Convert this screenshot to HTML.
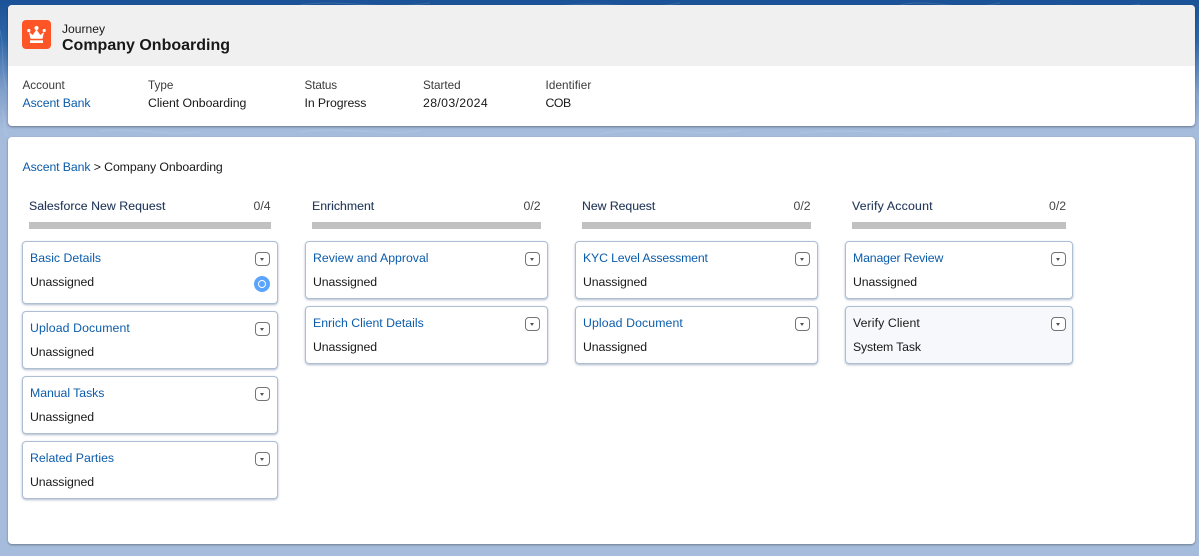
<!DOCTYPE html>
<html><head><meta charset="utf-8">
<style>
html,body{margin:0;padding:0}
body{width:1199px;height:556px;overflow:hidden;position:relative;font-family:"Liberation Sans",sans-serif;font-size:12.3px;color:#181818;background:linear-gradient(180deg,#1b5297 0,#2f66a8 40px,#7f9fcb 90px,#a6bcdc 130px,#a6bcdc 100%)}
.t{position:absolute;white-space:nowrap;line-height:16px}
.a{color:#0b5cab}
.p{position:absolute;background:#fff;box-shadow:0 1px 2px rgba(0,0,0,.35)}
.card{position:absolute;box-sizing:border-box;background:#fff;border:1px solid #aebfd4;border-radius:4px;box-shadow:0 1px 2px rgba(70,100,140,.45)}
.bar{position:absolute;height:7px;top:222px;background:#c1c1c1}
.dd{position:absolute;width:15px;height:14px;box-sizing:border-box;border:1px solid #747474;border-radius:4px;background:#fff}
.dd:after{content:"";position:absolute;left:4px;top:5px;border-left:2.5px solid transparent;border-right:2.5px solid transparent;border-top:3px solid #555}
.h{color:#24385a;-webkit-text-stroke:.1px #24385a}
.c{color:#444}
.l{color:#3a3a3a;font-size:11.7px}
.u{letter-spacing:-.1px}
</style></head><body>
<svg style="position:absolute;left:0;top:0" width="1199" height="140" fill="none" stroke="#fff" stroke-opacity=".12">
<path d="M0 30C5 50 0 70 7 90M2 110C6 120 3 130 7 136M900 5C930 -2 960 12 1000 3M1040 8C1070 0 1100 12 1140 4M1191 20C1197 40 1190 70 1198 100M300 132C340 126 380 136 420 131M600 134C640 126 690 136 740 131M800 133C850 128 900 136 950 131M100 131C130 127 160 136 200 132M300 5C340 -1 380 10 430 3M560 6C600 0 640 11 680 3"/>
</svg>
<div class="p" style="left:8px;top:5px;width:1187px;height:121px;border-radius:4px;overflow:hidden"><div style="height:61px;background:#f0f0f0"></div></div>
<div style="position:absolute;left:22px;top:20px;width:29px;height:29px;border-radius:4px;background:#fe5527"></div>
<svg style="position:absolute;left:22px;top:20px" width="29" height="29" viewBox="0 0 29 29"><g fill="#fff"><circle cx="14.5" cy="8" r="2"/><circle cx="6.8" cy="10.5" r="1.6"/><circle cx="22.2" cy="10.5" r="1.6"/><path d="M7 12l3.7 3 3.8-5.5 3.8 5.5 3.7-3-1.5 6.8H8.5z"/><rect x="8" y="20.3" width="13" height="2.7"/></g></svg>
<div class="t" style="left:62px;top:21px;font-size:12.1px">Journey</div>
<div class="t" style="left:62px;top:36px;font-size:16px;font-weight:bold;line-height:20px">Company Onboarding</div>

<div class="t l" style="left:22.5px;top:78px">Account</div>
<div class="t a" style="left:22.5px;top:95px;letter-spacing:-.1px">Ascent Bank</div>
<div class="t l" style="left:148px;top:78px">Type</div>
<div class="t" style="left:148px;top:95px;letter-spacing:-.05px">Client Onboarding</div>
<div class="t l" style="left:304.5px;top:78px;letter-spacing:-.1px">Status</div>
<div class="t" style="left:304.5px;top:95px;letter-spacing:-.1px">In Progress</div>
<div class="t l" style="left:423px;top:78px">Started</div>
<div class="t" style="left:423px;top:95px;letter-spacing:.35px">28/03/2024</div>
<div class="t l" style="left:545.5px;top:78px;letter-spacing:.1px">Identifier</div>
<div class="t" style="left:545.5px;top:95px;letter-spacing:-.5px">COB</div>

<div class="p" style="left:8px;top:137px;width:1187px;height:407px;border-radius:4px"></div>
<div class="t" style="left:22.5px;top:159px;letter-spacing:-.1px"><span class="a">Ascent Bank</span> &gt; Company Onboarding</div>

<div class="t h" style="left:29px;top:198px;letter-spacing:.05px">Salesforce New Request</div>
<div class="t c" style="left:253.5px;top:198px">0/4</div>
<div class="bar" style="left:29px;width:242px"></div>
<div class="t h" style="left:312px;top:198px">Enrichment</div>
<div class="t c" style="left:523.5px;top:198px">0/2</div>
<div class="bar" style="left:312px;width:229px"></div>
<div class="t h" style="left:582px;top:198px;letter-spacing:-.05px">New Request</div>
<div class="t c" style="left:793.5px;top:198px">0/2</div>
<div class="bar" style="left:582px;width:229px"></div>
<div class="t h" style="left:852px;top:198px;letter-spacing:.2px">Verify Account</div>
<div class="t c" style="left:1049px;top:198px">0/2</div>
<div class="bar" style="left:852px;width:214px"></div>

<div class="card" style="left:22px;top:241px;width:256px;height:63px"></div>
<div class="t a" style="left:30px;top:250px">Basic Details</div><div class="t u" style="left:30px;top:274px">Unassigned</div><div class="dd" style="left:255px;top:252px"></div>
<div style="position:absolute;left:254px;top:276px;width:16px;height:16px;border-radius:50%;background:#5aa5fb"></div>
<div style="position:absolute;left:258px;top:280px;width:8px;height:8px;box-sizing:border-box;border-radius:50%;border:1px solid #fff"></div>

<div class="card" style="left:22px;top:311px;width:256px;height:58px"></div>
<div class="t a" style="left:30px;top:320px;letter-spacing:.1px">Upload Document</div><div class="t u" style="left:30px;top:344px">Unassigned</div><div class="dd" style="left:255px;top:322px"></div>

<div class="card" style="left:22px;top:376px;width:256px;height:58px"></div>
<div class="t a" style="left:30px;top:385px;letter-spacing:-.05px">Manual Tasks</div><div class="t u" style="left:30px;top:409px">Unassigned</div><div class="dd" style="left:255px;top:387px"></div>

<div class="card" style="left:22px;top:441px;width:256px;height:58px"></div>
<div class="t a" style="left:30px;top:450px">Related Parties</div><div class="t u" style="left:30px;top:474px">Unassigned</div><div class="dd" style="left:255px;top:452px"></div>

<div class="card" style="left:305px;top:241px;width:243px;height:58px"></div>
<div class="t a" style="left:313px;top:250px">Review and Approval</div><div class="t u" style="left:313px;top:274px">Unassigned</div><div class="dd" style="left:525px;top:252px"></div>

<div class="card" style="left:305px;top:306px;width:243px;height:58px"></div>
<div class="t a" style="left:313px;top:315px">Enrich Client Details</div><div class="t u" style="left:313px;top:339px">Unassigned</div><div class="dd" style="left:525px;top:317px"></div>

<div class="card" style="left:575px;top:241px;width:243px;height:58px"></div>
<div class="t a" style="left:583px;top:250px;letter-spacing:-.15px">KYC Level Assessment</div><div class="t u" style="left:583px;top:274px">Unassigned</div><div class="dd" style="left:795px;top:252px"></div>

<div class="card" style="left:575px;top:306px;width:243px;height:58px"></div>
<div class="t a" style="left:583px;top:315px;letter-spacing:.1px">Upload Document</div><div class="t u" style="left:583px;top:339px">Unassigned</div><div class="dd" style="left:795px;top:317px"></div>

<div class="card" style="left:845px;top:241px;width:228px;height:58px"></div>
<div class="t a" style="left:853px;top:250px;letter-spacing:-.15px">Manager Review</div><div class="t u" style="left:853px;top:274px">Unassigned</div><div class="dd" style="left:1051px;top:252px"></div>

<div class="card" style="left:845px;top:306px;width:228px;height:58px;background:#f6f8fc"></div>
<div class="t" style="left:853px;top:315px;letter-spacing:.1px">Verify Client</div><div class="t" style="left:853px;top:339px;letter-spacing:-.15px">System Task</div><div class="dd" style="left:1051px;top:317px"></div>
</body></html>
